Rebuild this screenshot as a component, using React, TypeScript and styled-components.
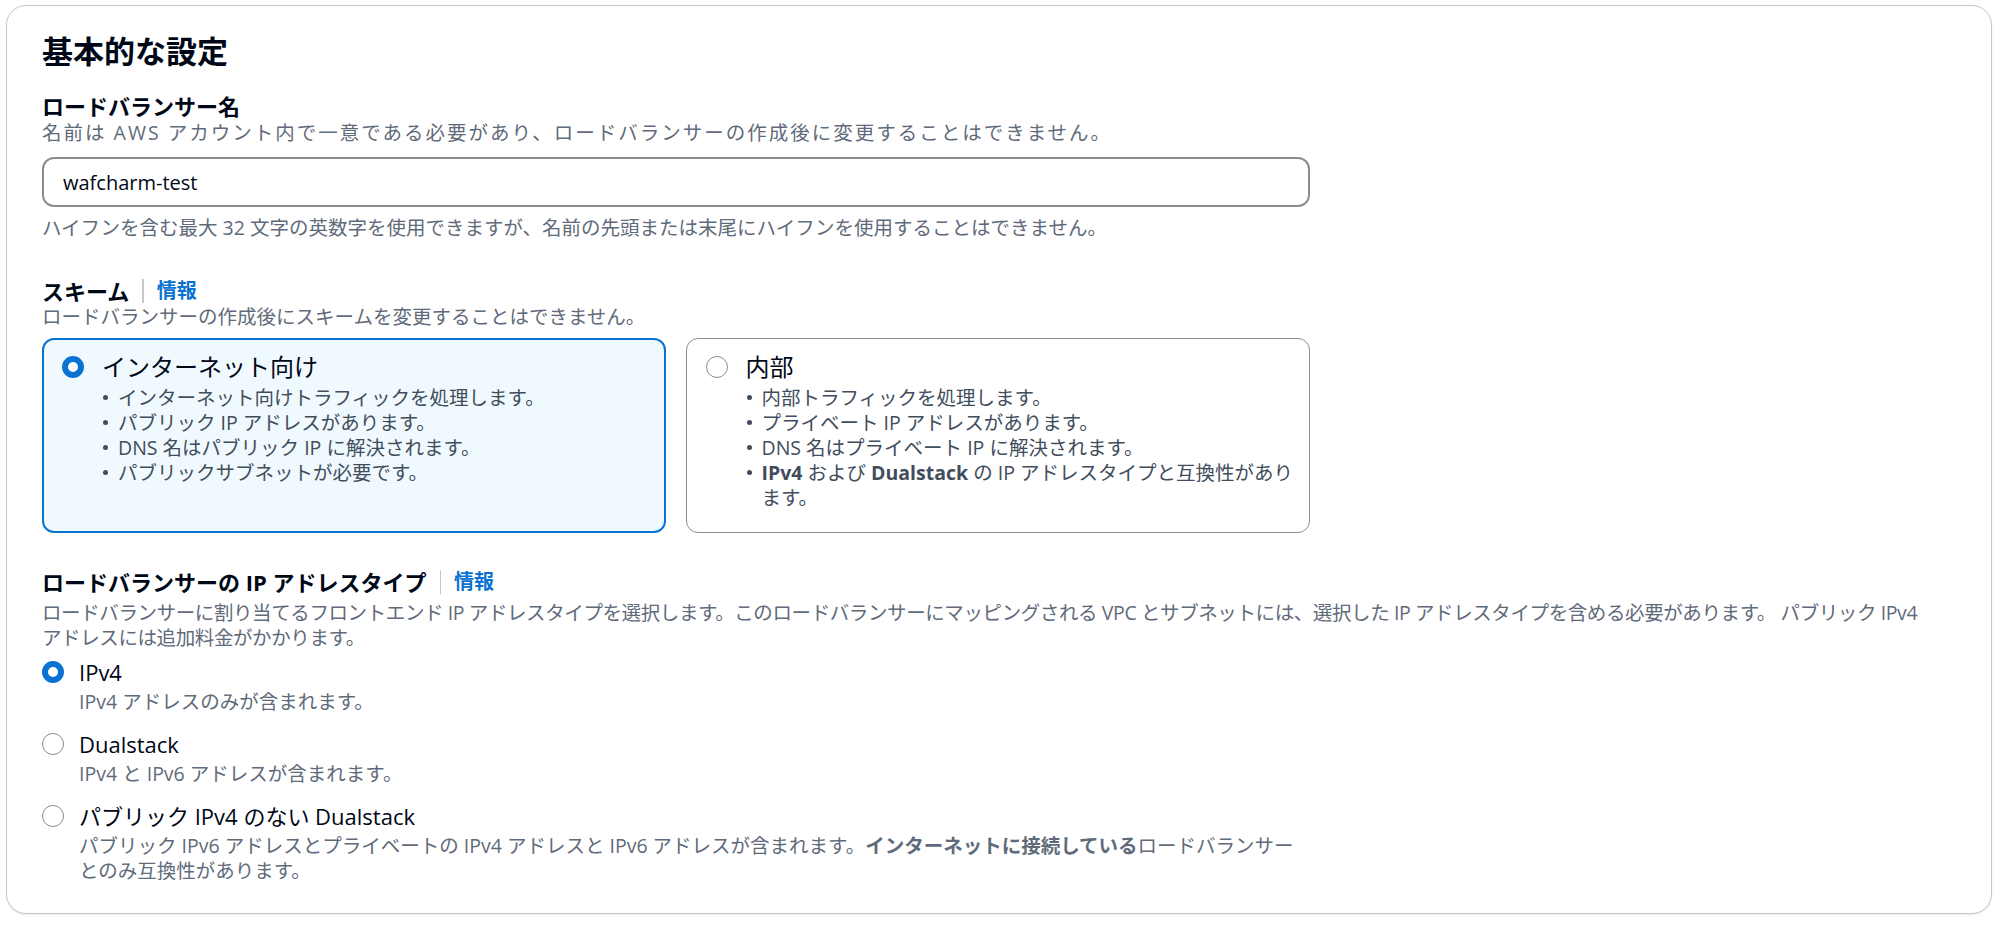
import React from 'react';
import styled, { createGlobalStyle } from 'styled-components';

const GlobalStyle = createGlobalStyle`
  body {
    margin: 0;
    background: #ffffff;
    font-family: 'Open Sans', 'Noto Sans CJK JP', sans-serif;
    color: #000716;
  }
`;

const Page = styled.div`
  padding: 5px 8px 11px 6px;
`;

const Card = styled.section`
  border: 1px solid #c6c6cd;
  border-radius: 20px;
  padding: 25px 34px 30px 35px;
  background: #ffffff;
  box-shadow: 0 1px 2px rgba(0, 7, 22, 0.08);
`;

const Title = styled.h2`
  margin: 0;
  font-size: 31px;
  line-height: 40px;
  font-weight: 700;
`;

const Field = styled.div<{ $top: number }>`
  margin-top: ${(p) => p.$top}px;
`;

const LabelRow = styled.div`
  display: flex;
  align-items: center;
`;

const Label = styled.div`
  font-size: 22px;
  line-height: 26px;
  font-weight: 700;
`;

const Divider = styled.span`
  width: 1.5px;
  height: 24px;
  background: #c6c6cd;
  margin: 0 13px;
`;

const InfoLink = styled.a`
  font-size: 20px;
  line-height: 26px;
  font-weight: 700;
  color: #0972d3;
  text-decoration: none;
`;

const Desc = styled.div<{ $top?: number; $spacing?: number }>`
  margin-top: ${(p) => p.$top ?? 0}px;
  font-size: 19.5px;
  line-height: 25px;
  color: #5f6b7a;
  white-space: nowrap;
  letter-spacing: ${(p) => p.$spacing ?? 0}px;
`;

const Input = styled.input`
  display: block;
  box-sizing: border-box;
  margin-top: 12px;
  width: 1268px;
  height: 50px;
  border: 2px solid #8c8c94;
  border-radius: 12px;
  padding: 0 19px;
  font-family: inherit;
  font-size: 20px;
  color: #000716;
  background: #ffffff;
  outline: none;
`;

const TileGrid = styled.div`
  margin-top: 9px;
  width: 1268px;
  display: grid;
  grid-template-columns: repeat(2, minmax(0, 1fr));
  gap: 20px;
`;

const Tile = styled.div<{ $selected?: boolean }>`
  box-sizing: border-box;
  border-radius: 12px;
  border: ${(p) => (p.$selected ? '2px solid #0972d3' : '1.5px solid #8c8c94')};
  background: ${(p) => (p.$selected ? '#f0f9fd' : '#ffffff')};
  padding: ${(p) => (p.$selected ? '12px 20px 22px 18px' : '12.5px 20px 22.5px 18.5px')};
`;

const TileHead = styled.div`
  display: flex;
  align-items: center;
  gap: 18px;
  font-size: 24px;
  line-height: 30px;
`;

const Radio = styled.span<{ $checked?: boolean }>`
  box-sizing: border-box;
  flex-shrink: 0;
  width: 22px;
  height: 22px;
  border-radius: 50%;
  background: #ffffff;
  border: ${(p) => (p.$checked ? '6px solid #0972d3' : '1.5px solid #8c8c94')};
`;

const Bullets = styled.ul`
  list-style: none;
  margin: 3px 0 0 40px;
  padding: 0;
`;

const Bullet = styled.li`
  display: flex;
  font-size: 19.5px;
  line-height: 25px;
  color: #414d5c;
  white-space: nowrap;

  &::before {
    content: '';
    flex-shrink: 0;
    width: 5px;
    height: 5px;
    border-radius: 50%;
    background: #414d5c;
    margin: 10px 10px 0 1px;
  }

  b {
    font-weight: 700;
  }
`;

const RadioGroup = styled.div`
  margin-top: 8px;
  display: flex;
  flex-direction: column;
  gap: 16px;
`;

const RadioItem = styled.div``;

const RadioRow = styled.div`
  display: flex;
  align-items: center;
  gap: 15px;
  font-size: 22px;
  line-height: 28px;
`;

const RadioDesc = styled(Desc)`
  margin: 3px 0 0 37px;

  b {
    font-weight: 700;
  }
`;

const schemeTiles = [
  {
    title: 'インターネット向け',
    selected: true,
    items: [
      'インターネット向けトラフィックを処理します。',
      'パブリック IP アドレスがあります。',
      'DNS 名はパブリック IP に解決されます。',
      'パブリックサブネットが必要です。',
    ],
  },
  {
    title: '内部',
    selected: false,
    items: [
      '内部トラフィックを処理します。',
      'プライベート IP アドレスがあります。',
      'DNS 名はプライベート IP に解決されます。',
    ],
  },
];

const App: React.FC = () => {
  return (
    <>
      <GlobalStyle />
      <Page>
        <Card>
          <Title>基本的な設定</Title>

          <Field $top={22}>
            <Label>ロードバランサー名</Label>
            <Desc $top={1} $spacing={2}>
              名前は AWS アカウント内で一意である必要があり、ロードバランサーの作成後に変更することはできません。
            </Desc>
            <Input value="wafcharm-test" readOnly />
            <Desc $top={8}>
              ハイフンを含む最大 32 文字の英数字を使用できますが、名前の先頭または末尾にハイフンを使用することはできません。
            </Desc>
          </Field>

          <Field $top={38}>
            <LabelRow>
              <Label>スキーム</Label>
              <Divider />
              <InfoLink href="#">情報</InfoLink>
            </LabelRow>
            <Desc>ロードバランサーの作成後にスキームを変更することはできません。</Desc>
            <TileGrid>
              {schemeTiles.map((t) => (
                <Tile key={t.title} $selected={t.selected}>
                  <TileHead>
                    <Radio $checked={t.selected} />
                    {t.title}
                  </TileHead>
                  <Bullets>
                    {t.items.map((i) => (
                      <Bullet key={i}>{i}</Bullet>
                    ))}
                    {!t.selected && (
                      <Bullet>
                        <span>
                          <b>IPv4</b> および <b>Dualstack</b> の IP アドレスタイプと互換性があり
                          <br />
                          ます。
                        </span>
                      </Bullet>
                    )}
                  </Bullets>
                </Tile>
              ))}
            </TileGrid>
          </Field>

          <Field $top={36}>
            <LabelRow>
              <Label>ロードバランサーの IP アドレスタイプ</Label>
              <Divider />
              <InfoLink href="#">情報</InfoLink>
            </LabelRow>
            <Desc $top={5} $spacing={-0.4}>
              ロードバランサーに割り当てるフロントエンド IP アドレスタイプを選択します。このロードバランサーにマッピングされる VPC
              とサブネットには、選択した IP アドレスタイプを含める必要があります。 パブリック IPv4
              <br />
              アドレスには追加料金がかかります。
            </Desc>
            <RadioGroup>
              <RadioItem>
                <RadioRow>
                  <Radio $checked />
                  IPv4
                </RadioRow>
                <RadioDesc>IPv4 アドレスのみが含まれます。</RadioDesc>
              </RadioItem>
              <RadioItem>
                <RadioRow>
                  <Radio />
                  Dualstack
                </RadioRow>
                <RadioDesc>IPv4 と IPv6 アドレスが含まれます。</RadioDesc>
              </RadioItem>
              <RadioItem>
                <RadioRow>
                  <Radio />
                  パブリック IPv4 のない Dualstack
                </RadioRow>
                <RadioDesc>
                  パブリック IPv6 アドレスとプライベートの IPv4 アドレスと IPv6 アドレスが含まれます。
                  <b>インターネットに接続している</b>ロードバランサー
                  <br />
                  とのみ互換性があります。
                </RadioDesc>
              </RadioItem>
            </RadioGroup>
          </Field>
        </Card>
      </Page>
    </>
  );
};

export default App;
